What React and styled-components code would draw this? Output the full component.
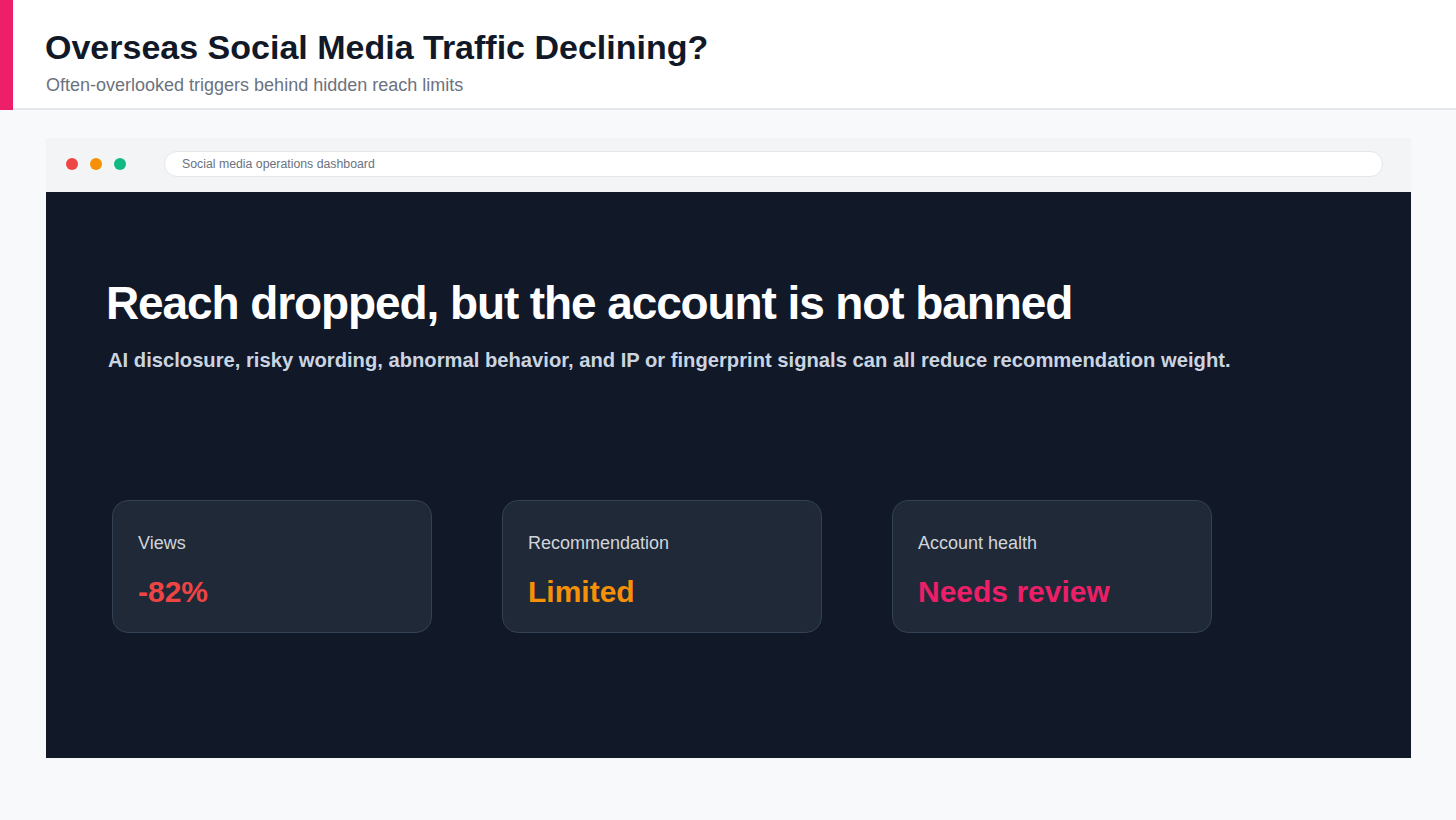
import styled, { createGlobalStyle } from 'styled-components';

const GlobalStyle = createGlobalStyle`
  html, body {
    margin: 0;
    padding: 0;
    background: #f8f9fb;
    font-family: "Liberation Sans", Arial, sans-serif;
  }
`;

const Page = styled.div`
  width: 1456px;
  height: 820px;
  background: #f8f9fb;
  overflow: hidden;
`;

const Header = styled.header`
  display: flex;
  height: 108px;
  background: #fff;
  border-bottom: 2px solid #e5e7eb;
`;

const Accent = styled.div`
  width: 13px;
  margin-bottom: -2px;
  background: #ec1f68;
  flex-shrink: 0;
`;

const HeaderText = styled.div`
  padding: 27px 0 0 32px;
`;

const Title = styled.h1`
  margin: 0;
  font-size: 34px;
  line-height: 40px;
  font-weight: 700;
  color: #111827;
`;

const Subtitle = styled.p`
  margin: 7px 0 0 1px;
  font-size: 18px;
  line-height: 22px;
  color: #6b7280;
`;

const Main = styled.main`
  padding: 28px 45px 0 46px;
`;

const Window = styled.section`
  display: flex;
  flex-direction: column;
  height: 620px;
`;

const Toolbar = styled.div`
  display: flex;
  align-items: center;
  height: 54px;
  box-sizing: border-box;
  padding: 0 28px 2px 20px;
  background: #f3f4f6;
`;

const Dots = styled.div`
  display: flex;
  gap: 12px;
  margin-right: 38px;
`;

const Dot = styled.span`
  width: 12px;
  height: 12px;
  border-radius: 50%;
  background: ${(p) => p.$color};
`;

const UrlBar = styled.div`
  flex: 1;
  height: 24px;
  display: flex;
  align-items: center;
  padding: 0 17px;
  background: #fff;
  border: 1px solid #e5e7eb;
  border-radius: 13px;
  font-size: 12.3px;
  color: #6b7280;
`;

const Screen = styled.div`
  flex: 1;
  background: #111827;
  padding: 84px 60px 0 60px;
`;

const Headline = styled.h2`
  margin: 0;
  font-size: 46px;
  line-height: 54px;
  font-weight: 700;
  letter-spacing: -1.1px;
  color: #fff;
`;

const Lead = styled.p`
  margin: 18px 0 0 2px;
  font-size: 20.2px;
  line-height: 24px;
  font-weight: 700;
  color: #cbd5e1;
`;

const Cards = styled.div`
  display: flex;
  gap: 70px;
  margin: 128px 0 0 6px;
`;

const Card = styled.div`
  width: 320px;
  height: 133px;
  box-sizing: border-box;
  padding: 32px 25px 0;
  background: #1f2937;
  border: 1px solid #334155;
  border-radius: 16px;
`;

const CardLabel = styled.div`
  font-size: 18px;
  line-height: 20px;
  color: #d1d5db;
`;

const CardValue = styled.div`
  margin-top: 22px;
  font-size: 30px;
  line-height: 34px;
  font-weight: 700;
  color: ${(p) => p.$color};
`;

const stats = [
  { label: 'Views', value: '-82%', color: '#ef4444' },
  { label: 'Recommendation', value: 'Limited', color: '#f59008' },
  { label: 'Account health', value: 'Needs review', color: '#ec1f68' },
];

const App = () => {
  return (
    <Page>
      <GlobalStyle />
      <Header>
        <Accent />
        <HeaderText>
          <Title>Overseas Social Media Traffic Declining?</Title>
          <Subtitle>Often-overlooked triggers behind hidden reach limits</Subtitle>
        </HeaderText>
      </Header>
      <Main>
        <Window>
          <Toolbar>
            <Dots>
              <Dot $color="#ef4444" />
              <Dot $color="#f59008" />
              <Dot $color="#10b981" />
            </Dots>
            <UrlBar>Social media operations dashboard</UrlBar>
          </Toolbar>
          <Screen>
            <Headline>Reach dropped, but the account is not banned</Headline>
            <Lead>
              AI disclosure, risky wording, abnormal behavior, and IP or fingerprint signals can all reduce recommendation weight.
            </Lead>
            <Cards>
              {stats.map((s) => (
                <Card key={s.label}>
                  <CardLabel>{s.label}</CardLabel>
                  <CardValue $color={s.color}>{s.value}</CardValue>
                </Card>
              ))}
            </Cards>
          </Screen>
        </Window>
      </Main>
    </Page>
  );
};

export default App;
